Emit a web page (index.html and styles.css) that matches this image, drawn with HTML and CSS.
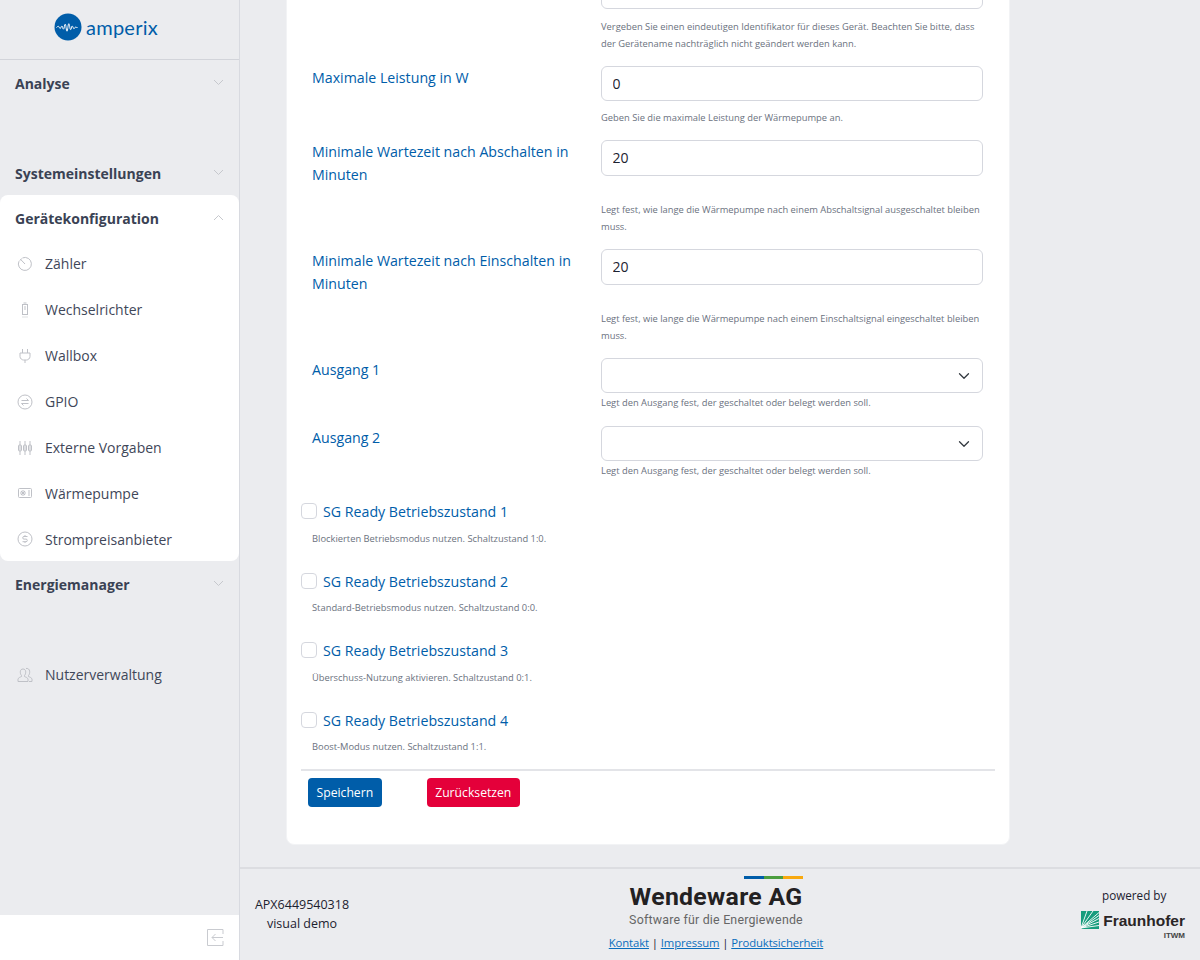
FILE: index.html
```html
<!DOCTYPE html>
<html lang="de">
<head>
<meta charset="utf-8">
<title>amperix</title>
<link rel="stylesheet" href="styles.css">
</head>
<body>
<div class="app">
  <aside class="sidebar">
    <div class="brand">
      <svg class="brand-mark" width="28" height="28" viewBox="0 0 28 28"><circle cx="14" cy="14" r="13.5" fill="#005da9"/><path d="M2.500 14.500c1-.8 1.500-1.600 2.200-1 .7.600.8 2 1.500 2s.9-2.500 1.700-2.500.8 3.200 1.600 3.200.9-5 1.700-5 1 7 1.800 7 1-7.500 1.800-7.500 1 6 1.800 6 .8-3.700 1.600-3.700.9 2.700 1.700 2.700.9-1.600 1.700-1.600 1 .7 1.900.4" fill="none" stroke="#fff" stroke-width="1"/></svg>
      <span class="brand-name">amperix</span>
    </div>
    <nav class="nav">
      <div class="nav-head">Analyse<svg class="chev" width="11" height="7" viewBox="0 0 11 7"><path d="M1 1l4.500 4.500L10 1"/></svg></div>
      <div class="nav-gap"></div>
      <div class="nav-head">Systemeinstellungen<svg class="chev" width="11" height="7" viewBox="0 0 11 7"><path d="M1 1l4.500 4.500L10 1"/></svg></div>
      <div class="nav-panel">
        <div class="nav-head nav-head-open">Gerätekonfiguration<svg class="chev" width="11" height="7" viewBox="0 0 11 7"><path d="M1 6l4.500-4.500L10 6"/></svg></div>
        <a class="nav-item"><svg class="ico" viewBox="0 0 16 16"><path d="M5.500 1.900A6.500 6.500 0 1 1 2 5.200M3.500 3.300 8 8"/><path d="M2.800 4.700 4.800 2.400"/></svg>Zähler</a>
        <a class="nav-item"><svg class="ico" viewBox="0 0 16 16"><rect x="5.500" y="2.500" width="5" height="10"/><path d="M6.500 1h3M7 5h2M7 7h2M5.500 15h1M7.500 15h1M9.500 15h1"/></svg>Wechselrichter</a>
        <a class="nav-item"><svg class="ico" viewBox="0 0 16 16"><path d="M5.500 1v4M10.500 1v4M3 5h10v3.500c0 2-2 3.500-3.500 3.500h-3C5 12 3 10.500 3 8.500zM8 12v3"/></svg>Wallbox</a>
        <a class="nav-item"><svg class="ico" viewBox="0 0 16 16"><circle cx="8" cy="8" r="7"/><path d="M4.500 6.500h7l-2-2M11.500 9.500h-7l2 2"/></svg>GPIO</a>
        <a class="nav-item"><svg class="ico" viewBox="0 0 16 16"><path d="M3 1v14M8 1v14M13 1v14"/><rect x="1.500" y="5" width="3" height="6" rx="1"/><rect x="6.500" y="5" width="3" height="6" rx="1"/><rect x="11.500" y="5" width="3" height="6" rx="1"/></svg>Externe Vorgaben</a>
        <a class="nav-item"><svg class="ico" viewBox="0 0 16 16"><rect x="1.500" y="3.500" width="13" height="9" rx="1"/><circle cx="6" cy="8" r="2.200"/><path d="M4 6l4 4M8 6l-4 4M11 6h2M11 8h2M11 10h2"/></svg>Wärmepumpe</a>
        <a class="nav-item"><svg class="ico" viewBox="0 0 16 16"><circle cx="8" cy="8" r="7"/><path d="M10.500 5.500H7a1.300 1.300 0 0 0 0 2.600h2a1.300 1.300 0 0 1 0 2.600H5.500M8 4v1.500M8 10.700v1.300"/></svg>Strompreisanbieter</a>
      </div>
      <div class="nav-head">Energiemanager<svg class="chev" width="11" height="7" viewBox="0 0 11 7"><path d="M1 1l4.500 4.500L10 1"/></svg></div>
      <div class="nav-gap"></div>
      <a class="nav-item"><svg class="ico" viewBox="0 0 16 16"><path d="M1 14.500v-2.200c0-1.500 2.500-2.300 3.500-2.800v-1C3.500 7.500 3.300 6 3.300 4.800 3.300 3 4.500 2 6 2s2.700 1 2.700 2.800c0 1.200-.2 2.700-1.200 3.700v1c1 .5 3.500 1.300 3.500 2.800v2.200z"/><path d="M9 1.500c1.500-.5 3.700.5 3.700 3.300 0 1.200-.2 2.700-1.200 3.700v1c1 .5 3.500 1.300 3.500 2.800v2.200h-3"/></svg>Nutzerverwaltung</a>
    </nav>
    <div class="collapse">
      <svg width="17" height="17" viewBox="0 0 17 17"><path d="M16 5V.5H.5v16H16V12M16 8.500H5M8.500 5 5 8.500 8.500 12"/></svg>
    </div>
  </aside>

  <div class="main">
    <div class="scroll">
      <form class="card">
        <div class="row">
          <span></span>
          <input class="field" type="text" value="">
          <p class="help help-wide">Vergeben Sie einen eindeutigen Identifikator für dieses Gerät. Beachten Sie bitte, dass der Gerätename nachträglich nicht geändert werden kann.</p>
        </div>
        <div class="row">
          <label class="label">Maximale Leistung in W</label>
          <input class="field" type="text" value="0">
          <p class="help">Geben Sie die maximale Leistung der Wärmepumpe an.</p>
        </div>
        <div class="row row-two">
          <label class="label">Minimale Wartezeit nach Abschalten in Minuten</label>
          <input class="field" type="text" value="20">
          <p class="help">Legt fest, wie lange die Wärmepumpe nach einem Abschaltsignal ausgeschaltet bleiben muss.</p>
        </div>
        <div class="row row-two">
          <label class="label">Minimale Wartezeit nach Einschalten in Minuten</label>
          <input class="field" type="text" value="20">
          <p class="help">Legt fest, wie lange die Wärmepumpe nach einem Einschaltsignal eingeschaltet bleiben muss.</p>
        </div>
        <div class="row row-select">
          <label class="label">Ausgang 1</label>
          <div class="select"><svg width="16" height="16" viewBox="0 0 16 16"><path d="m2 5 6 6 6-6" transform="translate(2 2) scale(.75)"/></svg></div>
          <p class="help">Legt den Ausgang fest, der geschaltet oder belegt werden soll.</p>
        </div>
        <div class="row row-select">
          <label class="label">Ausgang 2</label>
          <div class="select"><svg width="16" height="16" viewBox="0 0 16 16"><path d="m2 5 6 6 6-6" transform="translate(2 2) scale(.75)"/></svg></div>
          <p class="help">Legt den Ausgang fest, der geschaltet oder belegt werden soll.</p>
        </div>
        <div class="checks">
          <div class="check"><label class="check-label"><input class="box" type="checkbox">SG Ready Betriebszustand 1</label><p class="help help-check">Blockierten Betriebsmodus nutzen. Schaltzustand 1:0.</p></div>
          <div class="check"><label class="check-label"><input class="box" type="checkbox">SG Ready Betriebszustand 2</label><p class="help help-check">Standard-Betriebsmodus nutzen. Schaltzustand 0:0.</p></div>
          <div class="check"><label class="check-label"><input class="box" type="checkbox">SG Ready Betriebszustand 3</label><p class="help help-check">Überschuss-Nutzung aktivieren. Schaltzustand 0:1.</p></div>
          <div class="check"><label class="check-label"><input class="box" type="checkbox">SG Ready Betriebszustand 4</label><p class="help help-check">Boost-Modus nutzen. Schaltzustand 1:1.</p></div>
        </div>
        <div class="actions">
          <button class="btn btn-save" type="button">Speichern</button>
          <button class="btn btn-reset" type="button">Zurücksetzen</button>
        </div>
      </form>
    </div>
    <footer class="footer">
      <div class="foot-left">APX6449540318<br>visual demo</div>
      <div class="foot-mid">
        <div class="ww-bar"><i class="b1"></i><i class="b2"></i><i class="b3"></i></div>
        <div class="ww-name">Wendeware AG</div>
        <div class="ww-sub">Software für die Energiewende</div>
        <div class="foot-links"><a>Kontakt</a> | <a>Impressum</a> | <a>Produktsicherheit</a></div>
      </div>
      <div class="foot-right">
        <div class="powered">powered by</div>
        <div class="fh">
          <svg width="18" height="18" viewBox="0 0 18 18"><rect width="18" height="18" fill="#179c7d"/><path d="M0 17 18 7.500M0 17 18 11M0 17 18 14.500M0 17 18 4.500M0 17 18 1.500M0 17 12 0M0 17 6 0" stroke="#fff" stroke-width=".9" fill="none"/></svg>
          <div class="fh-text"><span class="fh-name">Fraunhofer</span><span class="fh-inst">ITWM</span></div>
        </div>
      </div>
    </footer>
  </div>
</div>
</body>
</html>
```

FILE: styles.css
```css
* { box-sizing: border-box; }
html, body { margin: 0; height: 100%; overflow: hidden; }
body { font-family: "Open Sans", "Noto Sans", sans-serif; background: #ebecef; color: #3a4254; }
p { margin: 0; }

.app { display: flex; height: 960px; }

/* Sidebar */
.sidebar { width: 240px; flex: none; display: flex; flex-direction: column; background: #ebecef; border-right: 1px solid #d8dae0; }
.brand { height: 60px; flex: none; display: flex; align-items: center; justify-content: center; gap: 4px; border-bottom: 1px solid #d2d4da; padding: 0 27px 6px 0; }
.brand-mark { display: block; }
.brand-name { font-family: "Lato", sans-serif; font-size: 20px; letter-spacing: .25px; color: #005da9; }
.nav { flex: 1; display: flex; flex-direction: column; }
.nav-head { height: 45px; display: flex; align-items: center; justify-content: space-between; padding: 2px 15px 0; font-size: 14px; font-weight: 700; color: #3a4254; }
.nav-gap { height: 45px; }
.chev { fill: none; stroke: #c6c8cd; stroke-width: 1; margin-right: 0; margin-top: -3px; }
.nav-panel { background: #fff; border-radius: 8px; width: 239px; height: 366px; }
.nav-item { height: 45.900px; display: flex; align-items: center; padding: 2px 0 0 17px; font-size: 14px; color: #3f4759; }
.ico { width: 16px; height: 16px; margin-right: 12px; fill: none; stroke: #bfc1c7; stroke-width: 1; flex: none; }
.collapse { height: 45px; flex: none; background: #fff; display: flex; align-items: center; justify-content: flex-end; padding-right: 15px; }
.collapse svg { fill: none; stroke: #c9cbd0; stroke-width: 1; }

/* Main */
.main { flex: 1; min-width: 0; display: flex; flex-direction: column; }
.scroll { height: 867px; flex: none; overflow: hidden; padding-left: 46px; }
.card { width: 724px; height: 872px; margin-top: -27px; background: #fff; border: 1px solid #f2f3f5; border-radius: 8px; padding: 0 14px; }

.row { display: grid; grid-template-columns: 289px 382px; padding-left: 11px; margin-bottom: 14px; }
.label { font-size: 14.200px; line-height: 22.500px; color: #005da9; padding-top: 1px; padding-right: 10px; }
.field { grid-column: 2; width: 382px; height: 35px; border: 1px solid #d5d7de; border-radius: 6px; padding: 0 10.500px 1px; font: 14px "Open Sans", sans-serif; color: #1c2230; background: #fff; outline: none; }
.help { grid-column: 2; font-size: 9.350px; line-height: 17px; color: #6b7280; margin-top: 8px; }
.help-wide { margin-top: 9px; }
.row-two .label { margin-bottom: 7px; grid-row: 1; }
.row-two .field { height: 36px; grid-row: 1; }
.row-two .help { margin-top: 8px; }
.row-select { margin-bottom: 15.500px; }
.row-select .help { margin-top: 0.500px; }
.select { grid-column: 2; height: 35px; border: 1px solid #d5d7de; border-radius: 6px; display: flex; align-items: center; justify-content: flex-end; padding-right: 10px; }
.select svg { fill: none; stroke: #343a40; stroke-width: 1.700; stroke-linecap: round; stroke-linejoin: round; }

.checks { margin-top: 21.500px; }
.check { height: 69.500px; }
.check-label { display: flex; align-items: center; font-size: 14.200px; line-height: 22.500px; padding-top: 1px; color: #005da9; }
.box { appearance: none; width: 16px; height: 16px; margin: 0 6px 0 0; border: 1px solid #d5d7de; border-radius: 4px; background: #fff; flex: none; position: relative; top: -1px; }
.help-check { margin: 6px 0 0 11px; }

.actions { margin-top: -9px; border-top: 2px solid #e3e4e8; padding: 7px 0 0 7px; display: flex; gap: 45px; width: 694px; position: relative; }
.btn { height: 29px; border: 0; border-radius: 4px; color: #fff; font: 12.200px "Open Sans", sans-serif; padding: 0 8.500px; }
.btn-save { background: #005da9; }
.btn-reset { background: #e4003a; }

/* Footer */
.footer { height: 93px; flex: none; border-top: 2px solid #dcdde1; background: #ebecef; display: flex; justify-content: space-between; position: relative; color: #1c2230; font-size: 12.500px; }
.foot-left { width: 124px; margin: 26px 0 0 0; text-align: center; line-height: 19px; }
.foot-mid { position: absolute; left: 348px; width: 256px; top: 7px; display: flex; flex-direction: column; align-items: center; }
.ww-bar { display: flex; height: 3px; width: 59px; margin-left: 115px; }
.ww-bar i { flex: 1; }
.b1 { background: #005da9; } .b2 { background: #4b9e3f; } .b3 { background: #f8a90f; }
.ww-name { font-family: "Roboto", sans-serif; font-weight: 700; font-size: 24.800px; line-height: 28px; letter-spacing: .3px; color: #232122; margin-top: 4px; }
.ww-sub { font-family: "Roboto", sans-serif; font-size: 12.400px; line-height: 15px; letter-spacing: .2px; color: #666; margin-top: 1px; }
.foot-links { margin-top: 7px; font-size: 11.300px; letter-spacing: -.1px; line-height: 17px; }
.foot-links a { color: #0a6ebd; text-decoration: underline; }
.foot-right { width: 124px; margin-top: 18px; padding-right: 15px; display: flex; flex-direction: column; align-items: flex-end; }
.powered { font-size: 11.700px; line-height: 17px; width: 64px; text-align: center; margin-right: 19px; white-space: nowrap; }
.fh { display: flex; gap: 4px; margin-top: 7px; }
.fh svg { display: block; }
.fh-text { display: flex; flex-direction: column; align-items: flex-end; }
.fh-name { font-family: "Liberation Sans", sans-serif; font-weight: 700; font-size: 15.500px; line-height: 19px; color: #2a2526; }
.fh-inst { font-family: "Liberation Sans", sans-serif; font-weight: 700; font-size: 8px; line-height: 10px; margin-top: 1px; color: #444; }
```
